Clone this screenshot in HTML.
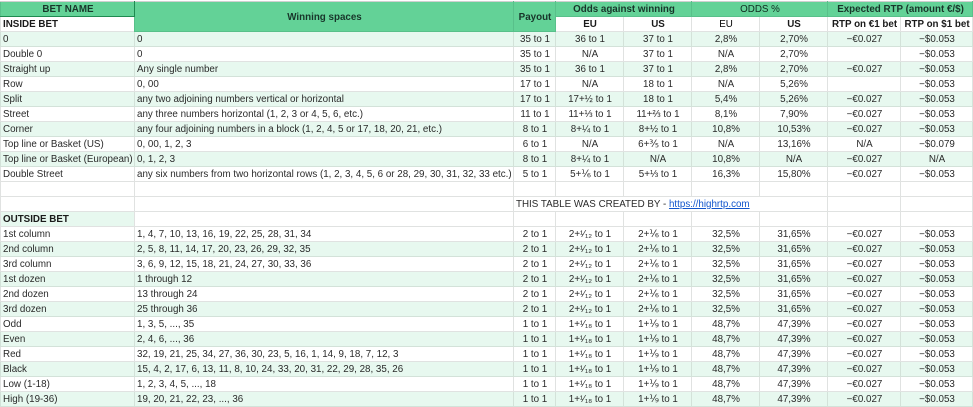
<!DOCTYPE html>
<html><head><meta charset="utf-8"><style>
html,body{margin:0;padding:0;background:#fff;width:973px;height:406px;overflow:hidden}
table{position:absolute;left:0;top:1px;border-collapse:collapse;table-layout:fixed;width:972px;font:9.8px/13px "Liberation Sans",sans-serif;color:#2a2a2a;filter:blur(.35px)}
td{height:15px;box-sizing:border-box;padding:1px 1px 0 2px;border:1px solid #e0e2e1;white-space:nowrap;overflow:hidden;text-align:center;border-top:0}
td.l{text-align:left}
tr.g td{background:#e7f8ef;border-color:#d3e2d9}
td.h{background:#63d297;color:#18352a;font-weight:bold;border-color:#58c08a}
td.w{background:#fff;color:#1a1a1a;font-weight:bold}
td.gc{background:#e7f8ef}
tr:first-child td{border-top:1px solid #d0d0d0}
b{color:#1a1a1a}
a{color:#1155cc;text-decoration:underline}
</style></head><body>
<table>
<colgroup><col style="width:134px"><col style="width:379px"><col style="width:42px"><col style="width:68px"><col style="width:68px"><col style="width:68px"><col style="width:68px"><col style="width:73px"><col style="width:72px"></colgroup>
<tr style="height:15px"><td class="h" style="border-bottom-color:#1e8a50;border-right-color:#1e8a50">BET NAME</td><td class="h" rowspan="2">Winning spaces</td><td class="h" rowspan="2">Payout</td><td class="h" colspan="2">Odds against winning</td><td class="h" colspan="2" style="font-weight:normal;color:#0f2a1f">ODDS %</td><td class="h" colspan="2">Expected RTP (amount €/$)</td></tr>
<tr style="height:15px"><td class="w l">INSIDE BET</td><td class="w">EU</td><td class="w">US</td><td class="w" style="font-weight:normal;color:#000">EU</td><td class="w">US</td><td class="w">RTP on €1 bet</td><td class="w">RTP on $1 bet</td></tr>
<tr class="g"><td class="l">0</td><td class="l">0</td><td>35 to 1</td><td>36 to 1</td><td>37 to 1</td><td>2,8%</td><td>2,70%</td><td>−€0.027</td><td>−$0.053</td></tr>
<tr><td class="l">Double 0</td><td class="l">0</td><td>35 to 1</td><td>N/A</td><td>37 to 1</td><td>N/A</td><td>2,70%</td><td></td><td>−$0.053</td></tr>
<tr class="g"><td class="l">Straight up</td><td class="l">Any single number</td><td>35 to 1</td><td>36 to 1</td><td>37 to 1</td><td>2,8%</td><td>2,70%</td><td>−€0.027</td><td>−$0.053</td></tr>
<tr><td class="l">Row</td><td class="l">0, 00</td><td>17 to 1</td><td>N/A</td><td>18 to 1</td><td>N/A</td><td>5,26%</td><td></td><td>−$0.053</td></tr>
<tr class="g"><td class="l">Split</td><td class="l">any two adjoining numbers vertical or horizontal</td><td>17 to 1</td><td>17+½ to 1</td><td>18 to 1</td><td>5,4%</td><td>5,26%</td><td>−€0.027</td><td>−$0.053</td></tr>
<tr><td class="l">Street</td><td class="l">any three numbers horizontal (1, 2, 3 or 4, 5, 6, etc.)</td><td>11 to 1</td><td>11+⅓ to 1</td><td>11+⅔ to 1</td><td>8,1%</td><td>7,90%</td><td>−€0.027</td><td>−$0.053</td></tr>
<tr class="g"><td class="l">Corner</td><td class="l">any four adjoining numbers in a block (1, 2, 4, 5 or 17, 18, 20, 21, etc.)</td><td>8 to 1</td><td>8+¼ to 1</td><td>8+½ to 1</td><td>10,8%</td><td>10,53%</td><td>−€0.027</td><td>−$0.053</td></tr>
<tr><td class="l">Top line or Basket (US)</td><td class="l">0, 00, 1, 2, 3</td><td>6 to 1</td><td>N/A</td><td>6+⅗ to 1</td><td>N/A</td><td>13,16%</td><td>N/A</td><td>−$0.079</td></tr>
<tr class="g"><td class="l">Top line or Basket (European)</td><td class="l">0, 1, 2, 3</td><td>8 to 1</td><td>8+¼ to 1</td><td>N/A</td><td>10,8%</td><td>N/A</td><td>−€0.027</td><td>N/A</td></tr>
<tr><td class="l">Double Street</td><td class="l">any six numbers from two horizontal rows (1, 2, 3, 4, 5, 6 or 28, 29, 30, 31, 32, 33 etc.)</td><td>5 to 1</td><td>5+⅙ to 1</td><td>5+⅓ to 1</td><td>16,3%</td><td>15,80%</td><td>−€0.027</td><td>−$0.053</td></tr>
<tr style="height:14px"><td style="height:14px"></td><td></td><td></td><td></td><td></td><td></td><td></td><td></td><td></td></tr>
<tr><td></td><td></td><td class="l" colspan="5">THIS TABLE WAS CREATED BY - <a>https://highrtp.com</a></td><td></td><td></td></tr>
<tr><td class="l gc"><b style="font-weight:bold">OUTSIDE BET</b></td><td></td><td></td><td></td><td></td><td></td><td></td><td></td><td></td></tr>
<tr><td class="l">1st column</td><td class="l">1, 4, 7, 10, 13, 16, 19, 22, 25, 28, 31, 34</td><td>2 to 1</td><td>2+¹⁄₁₂ to 1</td><td>2+⅙ to 1</td><td>32,5%</td><td>31,65%</td><td>−€0.027</td><td>−$0.053</td></tr>
<tr class="g"><td class="l">2nd column</td><td class="l">2, 5, 8, 11, 14, 17, 20, 23, 26, 29, 32, 35</td><td>2 to 1</td><td>2+¹⁄₁₂ to 1</td><td>2+⅙ to 1</td><td>32,5%</td><td>31,65%</td><td>−€0.027</td><td>−$0.053</td></tr>
<tr><td class="l">3rd column</td><td class="l">3, 6, 9, 12, 15, 18, 21, 24, 27, 30, 33, 36</td><td>2 to 1</td><td>2+¹⁄₁₂ to 1</td><td>2+⅙ to 1</td><td>32,5%</td><td>31,65%</td><td>−€0.027</td><td>−$0.053</td></tr>
<tr class="g"><td class="l">1st dozen</td><td class="l">1 through 12</td><td>2 to 1</td><td>2+¹⁄₁₂ to 1</td><td>2+⅙ to 1</td><td>32,5%</td><td>31,65%</td><td>−€0.027</td><td>−$0.053</td></tr>
<tr><td class="l">2nd dozen</td><td class="l">13 through 24</td><td>2 to 1</td><td>2+¹⁄₁₂ to 1</td><td>2+⅙ to 1</td><td>32,5%</td><td>31,65%</td><td>−€0.027</td><td>−$0.053</td></tr>
<tr class="g"><td class="l">3rd dozen</td><td class="l">25 through 36</td><td>2 to 1</td><td>2+¹⁄₁₂ to 1</td><td>2+⅙ to 1</td><td>32,5%</td><td>31,65%</td><td>−€0.027</td><td>−$0.053</td></tr>
<tr><td class="l">Odd</td><td class="l">1, 3, 5, ..., 35</td><td>1 to 1</td><td>1+¹⁄₁₈ to 1</td><td>1+⅑ to 1</td><td>48,7%</td><td>47,39%</td><td>−€0.027</td><td>−$0.053</td></tr>
<tr class="g"><td class="l">Even</td><td class="l">2, 4, 6, ..., 36</td><td>1 to 1</td><td>1+¹⁄₁₈ to 1</td><td>1+⅑ to 1</td><td>48,7%</td><td>47,39%</td><td>−€0.027</td><td>−$0.053</td></tr>
<tr><td class="l">Red</td><td class="l">32, 19, 21, 25, 34, 27, 36, 30, 23, 5, 16, 1, 14, 9, 18, 7, 12, 3</td><td>1 to 1</td><td>1+¹⁄₁₈ to 1</td><td>1+⅑ to 1</td><td>48,7%</td><td>47,39%</td><td>−€0.027</td><td>−$0.053</td></tr>
<tr class="g"><td class="l">Black</td><td class="l">15, 4, 2, 17, 6, 13, 11, 8, 10, 24, 33, 20, 31, 22, 29, 28, 35, 26</td><td>1 to 1</td><td>1+¹⁄₁₈ to 1</td><td>1+⅑ to 1</td><td>48,7%</td><td>47,39%</td><td>−€0.027</td><td>−$0.053</td></tr>
<tr><td class="l">Low (1-18)</td><td class="l">1, 2, 3, 4, 5, ..., 18</td><td>1 to 1</td><td>1+¹⁄₁₈ to 1</td><td>1+⅑ to 1</td><td>48,7%</td><td>47,39%</td><td>−€0.027</td><td>−$0.053</td></tr>
<tr class="g"><td class="l">High (19-36)</td><td class="l">19, 20, 21, 22, 23, ..., 36</td><td>1 to 1</td><td>1+¹⁄₁₈ to 1</td><td>1+⅑ to 1</td><td>48,7%</td><td>47,39%</td><td>−€0.027</td><td>−$0.053</td></tr>
</table>
</body></html>
